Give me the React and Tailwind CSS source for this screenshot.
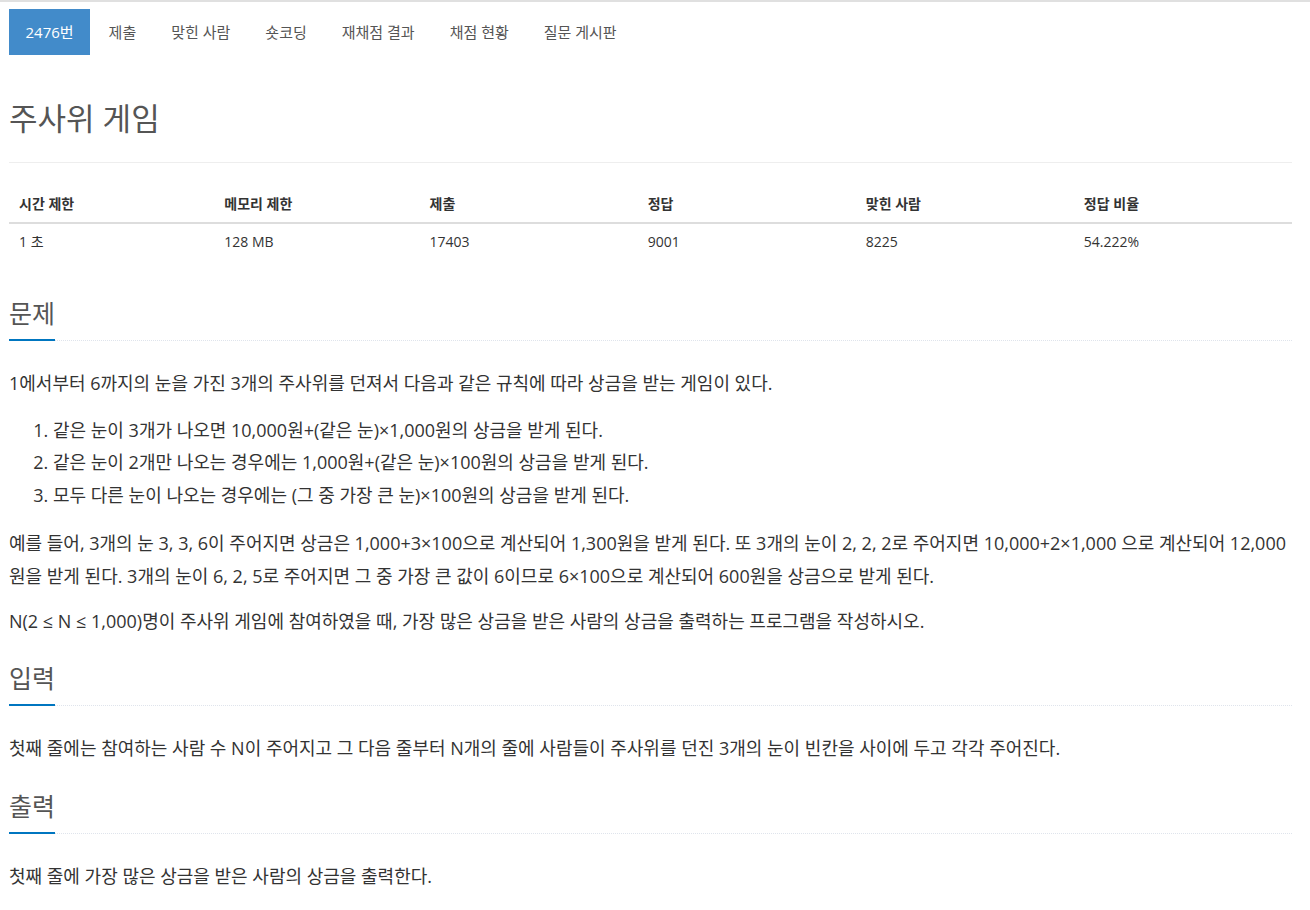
import React from "react";

const tabs = ["2476번", "제출", "맞힌 사람", "숏코딩", "재채점 결과", "채점 현황", "질문 게시판"];

const stats = [
  { label: "시간 제한", value: "1 초", w: "w-[16%]" },
  { label: "메모리 제한", value: "128 MB", w: "w-[16%]" },
  { label: "제출", value: "17403", w: "w-[17%]" },
  { label: "정답", value: "9001", w: "w-[17%]" },
  { label: "맞힌 사람", value: "8225", w: "w-[17%]" },
  { label: "정답 비율", value: "54.222%", w: "w-[17%]" },
];

const font = { fontFamily: '"Open Sans", "Noto Sans CJK KR", sans-serif' };

const Headline = ({ children }) => (
  <div className="border-b border-dotted border-[#dfe4ec]">
    <h2 className="inline-block -mb-px border-b-2 border-[#0076c0] pb-[12px] text-[25px] leading-[27px] text-[#555]">
      {children}
    </h2>
  </div>
);

const App = () => {
  return (
    <div className="min-h-[910px] border-t-2 border-[#e0e0e0] bg-white" style={font}>
      <div className="ml-[9px] w-[1283px]">
        {/* problem menu */}
        <ul className="mt-[7px] flex gap-[2px] text-[15px]">
          {tabs.map((t, i) => (
            <li key={t}>
              <span
                className={`block px-[16.5px] py-[13px] leading-5 ${
                  i === 0 ? "bg-[#428bca] text-white" : "text-[#555]"
                }`}
              >
                {t}
              </span>
            </li>
          ))}
        </ul>

        <div className="mt-[46px] border-b border-[#eee] pb-[27px]">
          <h1 className="text-[31px] leading-[34px] text-[#555]">주사위 게임</h1>
        </div>

        <table className="mt-[23px] w-full table-fixed text-left text-[14px] text-[#333]">
          <thead>
            <tr className="border-b-2 border-[#ddd]">
              {stats.map((s) => (
                <th key={s.label} className={`${s.w} py-2 pl-[10px] pr-2 font-bold leading-5`}>
                  {s.label}
                </th>
              ))}
            </tr>
          </thead>
          <tbody>
            <tr>
              {stats.map((s) => (
                <td key={s.label} className="py-2 pl-[10px] pr-2 leading-5">
                  {s.value}
                </td>
              ))}
            </tr>
          </tbody>
        </table>

        <div className="text-[18px] leading-[32.5px] text-[#333]">
          <section className="mt-[40px]">
            <Headline>문제</Headline>
            <div className="mt-[26px]">
              <p className="mb-[14px]">
                1에서부터 6까지의 눈을 가진 3개의 주사위를 던져서 다음과 같은 규칙에 따라 상금을 받는 게임이 있다.
              </p>
              <ol className="mb-4 list-decimal pl-11">
                <li>같은 눈이 3개가 나오면 10,000원+(같은 눈)×1,000원의 상금을 받게 된다.</li>
                <li>같은 눈이 2개만 나오는 경우에는 1,000원+(같은 눈)×100원의 상금을 받게 된다.</li>
                <li>모두 다른 눈이 나오는 경우에는 (그 중 가장 큰 눈)×100원의 상금을 받게 된다.</li>
              </ol>
              <p className="mb-[13px]">
                예를 들어, 3개의 눈 3, 3, 6이 주어지면 상금은 1,000+3×100으로 계산되어 1,300원을 받게 된다. 또 3개의
                눈이 2, 2, 2로 주어지면 10,000+2×1,000 으로 계산되어 12,000원을 받게 된다. 3개의 눈이 6, 2, 5로
                주어지면 그 중 가장 큰 값이 6이므로 6×100으로 계산되어 600원을 상금으로 받게 된다.
              </p>
              <p className="mb-3">
                N(2 ≤ N ≤ 1,000)명이 주사위 게임에 참여하였을 때, 가장 많은 상금을 받은 사람의 상금을 출력하는
                프로그램을 작성하시오.
              </p>
            </div>
          </section>

          <section className="mt-[27px]">
            <Headline>입력</Headline>
            <p className="mb-3 mt-[26px]">
              첫째 줄에는 참여하는 사람 수 N이 주어지고 그 다음 줄부터 N개의 줄에 사람들이 주사위를 던진 3개의 눈이
              빈칸을 사이에 두고 각각 주어진다.
            </p>
          </section>

          <section className="mt-[29px]">
            <Headline>출력</Headline>
            <p className="mb-3 mt-[26px]">첫째 줄에 가장 많은 상금을 받은 사람의 상금을 출력한다.</p>
          </section>
        </div>
      </div>
    </div>
  );
};

export default App;
